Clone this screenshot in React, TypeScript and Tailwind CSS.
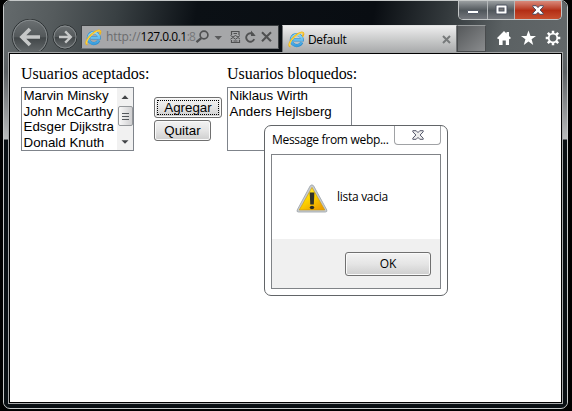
import React from "react";

const UI = "font-['Open_Sans','Noto_Sans',sans-serif]";

function IELogo() {
  return (
    <svg width="17" height="17" viewBox="0 0 17 17" className="block shrink-0">
      <defs>
        <linearGradient id="ie" x1="0" y1="0" x2="0" y2="1">
          <stop offset="0" stopColor="#8fd8f8" />
          <stop offset="1" stopColor="#3a9fe0" />
        </linearGradient>
      </defs>
      <path d="M13.8 11.4A5.5 5.5 0 1 1 14.3 8.9H5.4" fill="none" stroke="#2f8cca" strokeWidth="3.1" />
      <path d="M13.6 11.4A5.4 5.4 0 1 1 14.1 8.9H5.6" fill="none" stroke="url(#ie)" strokeWidth="2.2" />
      <path d="M2.4 15.6C-.6 15.2 2 9.4 6.6 5.3 11.4 1 16 .1 15.5 3.2 15.4 4.1 15 5 14.4 5.6" fill="none" stroke="#f0b41a" strokeWidth="1.7" />
      <path d="M2 14.8C.6 13 3.6 8.6 7 5.6 11 2.2 14.6 1 15.2 2.4" fill="none" stroke="#ffe050" strokeWidth="1" />
    </svg>
  );
}

function NavButtons() {
  return (
    <svg width="73" height="32" viewBox="0 0 73 32" className="block shrink-0">
      <defs>
        <linearGradient id="nav" x1="0" y1="0" x2="0" y2="1">
          <stop offset="0" stopColor="#6c7173" />
          <stop offset=".5" stopColor="#53585a" />
          <stop offset=".52" stopColor="#414648" />
          <stop offset="1" stopColor="#686d6f" />
        </linearGradient>
      </defs>
      <circle cx="26" cy="18" r="17.8" fill="url(#nav)" stroke="#2f3436" />
      <circle cx="26" cy="18" r="16.8" fill="none" stroke="#888d8f" />
      <path d="M26 10L18 18L26 26M18.4 18H36" fill="none" stroke="#c6c8c8" strokeWidth="3.7" />
      <circle cx="61" cy="18" r="12" fill="url(#nav)" stroke="#2f3436" />
      <circle cx="61" cy="18" r="11" fill="none" stroke="#868b8d" />
      <path d="M61.2 12.4L66.8 18L61.2 23.6M55 18H66" fill="none" stroke="#c6c8c8" strokeWidth="2.4" />
    </svg>
  );
}

function AddressIcons() {
  return (
    <svg width="80" height="22" viewBox="0 0 80 22" className="block shrink-0" fill="none" stroke="#505152">
      <circle cx="10" cy="9" r="3.9" strokeWidth="1.7" />
      <path d="M7.2 12.2L2.5 16.2" strokeWidth="2.4" />
      <path d="M20.5 10h7.5l-3.7 4z" fill="#5a5b5c" stroke="none" />
      <path d="M37.5 9V5.5h7.5V9M37.5 14v2.5h8V14" strokeWidth="1.2" />
      <path d="M36.5 9.5l2.5 1.5 2.5-1.5 2.5 1.5 2-1.5M36.5 13.2l2.5-1.7 2.5 1.7 2.5-1.7 2 1.7M39.5 7.5h3.5M39.5 15h4" strokeWidth="1" />
      <path d="M59.8 9.1A4.2 4.2 0 1 0 60.2 13.2" strokeWidth="1.9" />
      <path d="M57 4.5v5.4h4.6z" fill="#505152" stroke="none" />
      <path d="M68 6.3l9 9M77 6.3l-9 9" strokeWidth="2.1" />
    </svg>
  );
}

function ToolIcons() {
  return (
    <svg width="66" height="18" viewBox="0 0 66 18" className="block shrink-0" fill="#fff">
      <path d="M0 9L7 2L9.5 4.5V3H12V7L14 9L12.7 10.3L12 9.7V16H8.8V11.5H5.6V16H2V9.7L1.2 10.3z" />
      <path d="M31.5 1.5l2 5.4h5.5l-4.4 3.4 1.6 5.6-4.7-3.3-4.7 3.3 1.6-5.6-4.4-3.4h5.5z" />
      <circle cx="56" cy="9" r="4.3" fill="none" stroke="#fff" strokeWidth="1.8" />
      <path d="M56 1.7v3M56 13.3v3M48.7 9h3M60.3 9h3M50.8 3.8l2.1 2.1M59.1 12.1l2.1 2.1M50.8 14.2l2.1-2.1M59.1 5.9l2.1-2.1" stroke="#fff" strokeWidth="2.5" />
    </svg>
  );
}

function CloseGlyph({ fill, line }: { fill: string; line: string }) {
  return (
    <svg width="12" height="10" viewBox="0 0 12 10" className="block">
      <path d="M.8.7H4.2L6 2.6 7.8.7h3.4v1.1L8.1 5l3.1 3.2v1.1H7.8L6 7.4 4.2 9.3H.8V8.2L3.9 5 .8 1.8z" fill={fill} stroke={line} />
    </svg>
  );
}

function CaptionButtons() {
  return (
    <div className="flex h-[20px] w-[104px] shrink-0 overflow-hidden rounded-b-[5px] border border-t-0 border-[#c3c6c7]">
      <div className="flex w-[29px] items-center justify-center border-r border-[#b5b8ba] bg-linear-to-b from-[#a2a6a8] via-[#51575c] via-55% to-[#74777d]">
        <div className="mt-[5px] h-[4px] w-[12px] rounded-[1px] border border-[#555c69] bg-white" />
      </div>
      <div className="flex w-[27px] items-center justify-center border-r border-[#b5b8ba] bg-linear-to-b from-[#a2a6a8] via-[#51575c] via-55% to-[#74777d]">
        <svg width="13" height="11" viewBox="0 0 13 11"><rect x="1" y="1" width="11" height="9" rx="1" fill="#fff" stroke="#4d5260" /><rect x="4" y="4" width="5" height="3" fill="#777" stroke="#4d5260" /></svg>
      </div>
      <div className="flex flex-1 items-center justify-center bg-linear-to-b from-[#dc9285] via-[#b32d14] via-55% to-[#c74e2e]">
        <CloseGlyph fill="#fff" line="#4a4c62" />
      </div>
    </div>
  );
}

function Header() {
  return (
    <header className="flex h-[51px] flex-col overflow-hidden bg-[linear-gradient(100deg,#646a6c_0%,#555b5d_9%,#394043_20%,#0b1015_34%,#090d12_65%,#343a3d_78%,#5b6163_88%,#626769_100%)]">
      <div className="flex h-[18px] justify-end pr-[5px]"><div className="-mt-px"><CaptionButtons /></div></div>
      <div className="flex h-[33px]">
        <NavButtons />
        <div className="mt-[6px] ml-[4px] flex h-[24px] w-[198px] shrink-0 items-center border border-[#3b3f41] border-b-[#73777a] bg-[#a6a7a9] pl-[3px]">
          <IELogo />
          <div className={`ml-[4px] w-[88px] shrink-0 whitespace-nowrap text-[12px] leading-[20px] text-black ${UI}`}>
            <span className="tracking-[-0.1px] text-[#6b6c6e]">http://</span><span className="tracking-[-0.5px]">127.0.0.1</span><span className="tracking-[-0.8px] text-[#77787a]">:8</span>
          </div>
          <AddressIcons />
        </div>
        <div className="mt-[6px] ml-[3px] flex h-[27px] w-[175px] shrink-0 items-center border border-b-0 border-[#707375] border-t-[#e3e4e4] bg-linear-to-b from-[#eeeeee] to-[#a9abac] pl-[5px]">
          <IELogo />
          <span className={`mt-[2px] ml-[3px] text-[12px] leading-[20px] tracking-[-0.35px] text-black ${UI}`}>Default</span>
          <svg width="9" height="9" viewBox="0 0 9 9" className="mr-[5px] ml-auto"><path d="M1 1l7 7M8 1L1 8" stroke="#777a7b" strokeWidth="2" /></svg>
        </div>
        <div className="mt-[6px] h-[27px] w-[29px] shrink-0 border border-[#484b4d] border-t-[#989b9c] bg-linear-to-br from-[#56595b] to-[#8a8c8e]" />
        <div className="mt-[10px] ml-[11px]"><ToolIcons /></div>
      </div>
    </header>
  );
}

function ScrollBar() {
  return (
    <div className="flex w-[16px] shrink-0 flex-col items-center bg-[#f1f1f1]">
      <svg width="16" height="18" viewBox="0 0 16 18"><path d="M4.5 11h7L8 7.3z" fill="#424447" /></svg>
      <div className="flex h-[20px] w-[15px] shrink-0 flex-col items-center justify-center gap-[2px] rounded-[2px] border border-[#95989b] bg-linear-to-r from-[#f8f8f8] to-[#cfcfd1]">
        <div className="h-px w-[7px] bg-[#53575c]" />
        <div className="h-px w-[7px] bg-[#53575c]" />
        <div className="h-px w-[7px] bg-[#53575c]" />
      </div>
      <svg width="16" height="24" viewBox="0 0 16 24"><path d="M4.5 14.2h7L8 17.8z" fill="#424447" /></svg>
    </div>
  );
}

function ListBox({ items, width, scroll }: { items: string[]; width: string; scroll?: boolean }) {
  return (
    <div className={`flex h-[64px] overflow-hidden border border-[#7f848b] bg-white ${width}`}>
      <div className="flex-1 pl-[1.5px] font-['Liberation_Sans',Arial,sans-serif] text-[13.33px] leading-[15.5px] whitespace-nowrap text-black">
        {items.map((name) => <div key={name}>{name}</div>)}
      </div>
      {scroll && <ScrollBar />}
    </div>
  );
}

const BUTTON = "flex items-center justify-center rounded-[3px] border border-[#707070] bg-linear-to-b from-[#f3f3f3] via-[#e5e5e5] via-50% to-[#cecece] shadow-[inset_0_0_0_1px_#fafafa]";

function Dialog() {
  return (
    <div className={`absolute top-[125px] left-[264px] flex h-[171px] w-[184px] flex-col rounded-[7px] border border-[#626568] bg-white text-[12px] text-black ${UI}`}>
      <div className="flex h-[28px] shrink-0 justify-between pl-[7px]">
        <span className="mt-[5px] leading-[18px] tracking-[-0.3px] whitespace-nowrap">Message from webp...</span>
        <div className="mr-[6px] flex h-[19px] w-[47px] items-center justify-center rounded-b-[4px] border border-t-0 border-[#a0a2a5]">
          <CloseGlyph fill="#eeeeee" line="#55586a" />
        </div>
      </div>
      <div className="mx-[6px] flex h-[135px] flex-col border border-[#808387]">
        <div className="flex h-[84px] items-center pl-[24px]">
          <svg width="32" height="29" viewBox="0 0 32 29" className="mt-[2px]">
            <defs><linearGradient id="warn" x1="0" y1="0" x2=".7" y2="1"><stop stopColor="#fff26a" /><stop offset=".5" stopColor="#ffd700" /><stop offset="1" stopColor="#eca000" /></linearGradient></defs>
            <path d="M14.3 1.7Q16 0 17.6 1.8L30.8 26Q31.4 28 29.4 28H2.4Q.4 28 1.2 26z" fill="#c8ccd0" stroke="#a2a8ad" strokeWidth=".9" />
            <path d="M16 3.4L28.8 26H3.2z" fill="url(#warn)" stroke="#c59412" strokeWidth=".6" />
            <path d="M13.7 8.5h4.7l-.6 12h-3.5z" fill="#30312b" />
            <ellipse cx="16" cy="23.5" rx="2.2" ry="1.8" fill="#292a26" />
          </svg>
          <span className="ml-[9px] leading-[18px] tracking-[-0.28px]">lista vacia</span>
        </div>
        <div className="flex flex-1 justify-end bg-[#f0f0f0] pt-[13px] pr-[9px]">
          <button className={`h-[24px] w-[86px] ${BUTTON}`}>OK</button>
        </div>
      </div>
    </div>
  );
}

const SIDE = "w-[4px] shrink-0 bg-[linear-gradient(to_bottom,#606668_0px,#5b6063_20px,#b9bbbc_87px,#0a1014_88px,#0a1014_100%)]";

export default function App() {
  return (
    <div className="relative h-[411px] w-[572px] overflow-hidden bg-black pl-[3px]">
      <div className="flex h-[409px] w-[565px] flex-col overflow-hidden rounded-[7px] border border-[#c5c8c8] bg-[#0a1014]">
        <Header />
        <div className="flex h-[352px] shrink-0">
          <div className={SIDE} />
          <main className="flex-1 border border-[#a6a8a9]">
            <div className="flex h-full border border-black bg-white pt-[11px] pl-[11px]">
              <section className="w-[133px]">
                <h1 className="h-[22px] font-['Liberation_Serif',serif] text-[16px] leading-[18px] whitespace-nowrap text-black">Usuarios aceptados:</h1>
                <ListBox width="w-[113px]" scroll items={["Marvin Minsky", "John McCarthy", "Edsger Dijkstra", "Donald Knuth"]} />
              </section>
              <div className="flex w-[73px] flex-col items-start gap-[2px] pt-[32px] font-['Liberation_Sans',Arial,sans-serif] text-[13.33px] text-black">
                <button className={`h-[21px] w-[68px] p-[2px] ${BUTTON}`}><span className="flex h-full w-full items-center justify-center border border-dotted border-black">Agregar</span></button>
                <button className={`h-[21px] w-[57px] ${BUTTON}`}>Quitar</button>
              </div>
              <section>
                <h1 className="h-[22px] font-['Liberation_Serif',serif] text-[16px] leading-[18px] tracking-[-0.05px] whitespace-nowrap text-black">Usuarios bloquedos:</h1>
                <ListBox width="w-[125px]" items={["Niklaus Wirth", "Anders Hejlsberg"]} />
              </section>
            </div>
          </main>
          <div className={SIDE} />
        </div>
      </div>
      <Dialog />
    </div>
  );
}
